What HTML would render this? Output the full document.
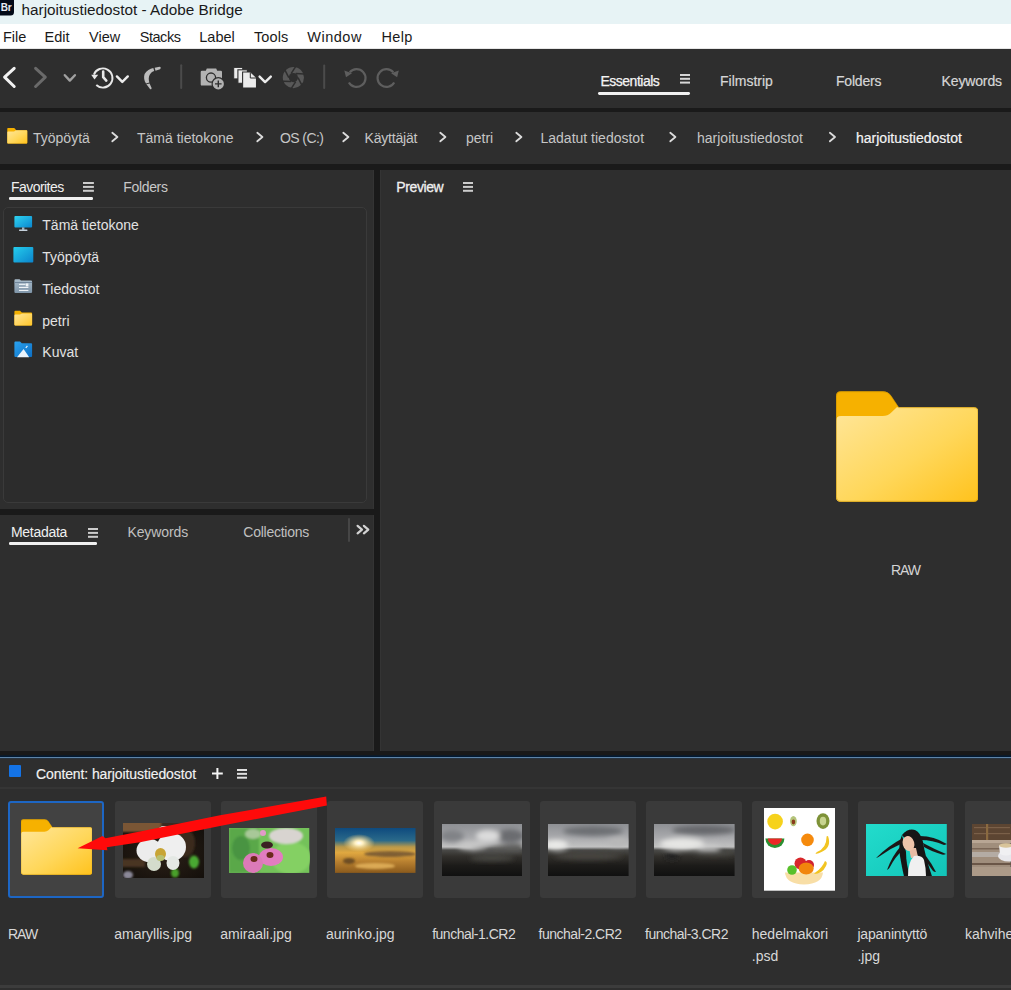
<!DOCTYPE html>
<html><head><meta charset="utf-8"><style>
html,body{margin:0;padding:0;}
body{width:1011px;height:990px;position:relative;overflow:hidden;background:#2e2e2e;font-family:"Liberation Sans",sans-serif;}
.t{position:absolute;line-height:1;white-space:nowrap;}
.r{position:absolute;}
</style></head><body>
<div class="r" style="left:0px;top:0px;width:1011px;height:24px;background:#e7f3f5;"></div>
<svg class="r" style="left:0px;top:0px" width="15" height="16" viewBox="0 0 15 16"><rect x="-4" y="-4" width="18" height="19.5" rx="3.5" fill="#030a18"/><text x="0.8" y="11.2" font-family="Liberation Sans" font-weight="bold" font-size="10" fill="#e8ecf4" letter-spacing="-0.3">Br</text></svg>
<div class="t" style="left:21.6px;top:1.55px;font-size:15.3px;color:#1a1a1a;">harjoitustiedostot - Adobe Bridge</div>
<div class="r" style="left:0px;top:24px;width:1011px;height:25px;background:#ffffff;"></div>
<div class="r" style="left:0px;top:47.5px;width:1011px;height:1.5px;background:#e6e6e6;"></div>
<div class="t" style="left:3px;top:29.53px;font-size:14.5px;color:#1a1a1a;letter-spacing:0px;">File</div>
<div class="t" style="left:44.5px;top:29.53px;font-size:14.5px;color:#1a1a1a;letter-spacing:0px;">Edit</div>
<div class="t" style="left:89px;top:29.53px;font-size:14.5px;color:#1a1a1a;letter-spacing:0px;">View</div>
<div class="t" style="left:139.7px;top:29.53px;font-size:14.5px;color:#1a1a1a;letter-spacing:-0.45px;">Stacks</div>
<div class="t" style="left:199.3px;top:29.53px;font-size:14.5px;color:#1a1a1a;letter-spacing:0px;">Label</div>
<div class="t" style="left:254px;top:29.53px;font-size:14.5px;color:#1a1a1a;letter-spacing:0.1px;">Tools</div>
<div class="t" style="left:307.3px;top:29.53px;font-size:14.5px;color:#1a1a1a;letter-spacing:0.5px;">Window</div>
<div class="t" style="left:381.5px;top:29.53px;font-size:14.5px;color:#1a1a1a;letter-spacing:0.35px;">Help</div>
<div class="r" style="left:0px;top:49px;width:1011px;height:59px;background:#2e2e2e;"></div>
<div class="r" style="left:0px;top:108px;width:1011px;height:4px;background:#1a1a1a;"></div>
<svg class="r" style="left:0px;top:0px" width="1011" height="108" viewBox="0 0 1011 108"><polyline points="14.2,68.3 4.6,77.2 14.2,86.5" fill="none" stroke="#f2f2f2" stroke-width="3" stroke-linecap="round" stroke-linejoin="round"/><polyline points="35.6,68.3 45.3,77.2 35.6,86.5" fill="none" stroke="#6a6a6a" stroke-width="3" stroke-linecap="round" stroke-linejoin="round"/><polyline points="64.8,75.2 69.8,80.6 74.9,75.2" fill="none" stroke="#a0a0a0" stroke-width="2.4" stroke-linecap="round" stroke-linejoin="round"/><path d="M93.9,74.6 A9.6,9.6 0 1 1 96.3,85.0" fill="none" stroke="#e8e8e8" stroke-width="1.9"/><polygon points="91.2,74.8 98.2,74.8 94.5,79.5" fill="#e8e8e8"/><polyline points="103.2,71.6 103.2,77.2 106.3,80.6" fill="none" stroke="#e8e8e8" stroke-width="2.6" stroke-linecap="round" stroke-linejoin="round"/><polyline points="116.9,76.4 122.3,81.9 127.8,76.4" fill="none" stroke="#ececec" stroke-width="2.4" stroke-linecap="round" stroke-linejoin="round"/><path d="M153.3,67.9 C150,68.3 146.5,70.5 144.6,74 C143.6,77 144,80.5 146,83.4 L149.4,82.5 C148.5,80 148.5,77 149.7,74.8 C150.8,72.8 152.5,71.5 154.2,71 Z" fill="#bcbcbc"/><path d="M154.7,67.7 L159.5,66.8 C161,66.8 161,68.3 160,69.2 L155.5,70.8 Z" fill="#bcbcbc"/><path d="M146.4,84.3 L149.6,83.6 L151.6,88 C151.6,89.2 150.6,89.6 150,89 Z" fill="#bcbcbc"/><rect x="180.2" y="64.2" width="2" height="24.7" rx="1" fill="#4b4b4b"/><rect x="323.2" y="64.5" width="2" height="24.5" rx="1" fill="#4b4b4b"/><path d="M200.7,72 Q200.7,70.8 202,70.8 H205.8 L206.8,68.5 H216.2 L217.2,70.8 H220.8 Q222,70.8 222,72 V84.4 Q222,85.6 220.8,85.6 H202 Q200.7,85.6 200.7,84.4 Z" fill="#b2b2b2"/><circle cx="211" cy="77.6" r="4.6" fill="none" stroke="#2e2e2e" stroke-width="1.3"/><circle cx="218.3" cy="83.9" r="6.8" fill="#2e2e2e"/><circle cx="218.3" cy="83.9" r="5.6" fill="#b2b2b2"/><path d="M218.3,80.6 V87.2 M215,83.9 H221.6" stroke="#2e2e2e" stroke-width="1.4"/><rect x="233.7" y="67.4" width="9" height="11.5" fill="#ececec" stroke="#2e2e2e" stroke-width="1"/><rect x="237.9" y="69.8" width="9.5" height="13.5" fill="#ececec" stroke="#2e2e2e" stroke-width="1.1"/><path d="M242.6,72 H250.8 L256.5,77.5 V88 H242.6 Z" fill="#ececec" stroke="#2e2e2e" stroke-width="1.1"/><path d="M250.3,72.5 V78 H256" fill="none" stroke="#2e2e2e" stroke-width="1"/><polyline points="259.6,76.6 265.1,82.1 270.8,76.6" fill="none" stroke="#ececec" stroke-width="2.4" stroke-linecap="round" stroke-linejoin="round"/><circle cx="293.4" cy="77.6" r="10.6" fill="#585858"/><circle cx="293.4" cy="77.6" r="4.6" fill="#2e2e2e"/><line x1="298.00" y1="77.60" x2="301.95" y2="85.30" stroke="#2e2e2e" stroke-width="1.5"/><line x1="295.70" y1="81.58" x2="291.01" y2="88.85" stroke="#2e2e2e" stroke-width="1.5"/><line x1="291.10" y1="81.58" x2="282.46" y2="81.15" stroke="#2e2e2e" stroke-width="1.5"/><line x1="288.80" y1="77.60" x2="284.85" y2="69.90" stroke="#2e2e2e" stroke-width="1.5"/><line x1="291.10" y1="73.62" x2="295.79" y2="66.35" stroke="#2e2e2e" stroke-width="1.5"/><line x1="295.70" y1="73.62" x2="304.34" y2="74.05" stroke="#2e2e2e" stroke-width="1.5"/><path d="M349.8,72.3 A8.9,8.9 0 1 1 348.9,82.45" fill="none" stroke="#5e5e5e" stroke-width="2.2"/><polygon points="344.3,70.6 352,73.2 346,77.3" fill="#5e5e5e"/><path d="M393.3,72.3 A8.9,8.9 0 1 0 394.2,82.45" fill="none" stroke="#5e5e5e" stroke-width="2.2"/><polygon points="398.8,70.6 391.1,73.2 397.1,77.3" fill="#5e5e5e"/></svg>
<div class="t" style="left:600.5px;top:74.25px;font-size:14px;color:#f4f4f4;letter-spacing:-0.5px;-webkit-text-stroke:0.25px #f4f4f4;">Essentials</div>
<div class="r" style="left:598px;top:91.9px;width:92px;height:2.8px;background:#f0f0f0;border-radius:1.4px;"></div>
<svg class="r" style="left:680px;top:73.8px" width="10.3" height="10" viewBox="0 0 10.3 10"><rect x="0" y="0.00" width="10.3" height="2" fill="#d6d6d6"/><rect x="0" y="3.80" width="10.3" height="2" fill="#d6d6d6"/><rect x="0" y="7.60" width="10.3" height="2" fill="#d6d6d6"/></svg>
<div class="t" style="left:720px;top:74.25px;font-size:14px;color:#d6d6d6;-webkit-text-stroke:0.2px #d6d6d6;">Filmstrip</div>
<div class="t" style="left:836px;top:74.25px;font-size:14px;color:#d6d6d6;letter-spacing:-0.2px;-webkit-text-stroke:0.2px #d6d6d6;">Folders</div>
<div class="t" style="left:941.6px;top:74.25px;font-size:14px;color:#d6d6d6;letter-spacing:-0.15px;-webkit-text-stroke:0.2px #d6d6d6;">Keywords</div>
<div class="r" style="left:0px;top:112px;width:1011px;height:52px;background:#2e2e2e;"></div>
<div class="r" style="left:0px;top:164px;width:1011px;height:6px;background:#1a1a1a;"></div>
<svg class="r" style="left:7px;top:128px" width="20.5" height="15.5" viewBox="0 0 143 111"><defs><linearGradient id="fg7_128" x1="0" y1="0" x2="1" y2="1"><stop offset="0" stop-color="#ffe69a"/><stop offset="0.55" stop-color="#ffd75a"/><stop offset="1" stop-color="#ffc21c"/></linearGradient></defs>
<path d="M0,5 Q0,0 5,0 H47 Q52,0 55,4 L63,16 H138 Q143,16 143,21 V106 Q143,111 138,111 H5 Q0,111 0,106 Z" fill="#f6b100"/>
<path d="M0,30 Q0,25 5,25 H47 Q52,25 55,22 L61,16 H138 Q143,16 143,21 V106 Q143,111 138,111 H5 Q0,111 0,106 Z" fill="url(#fg7_128)"/>
<path d="M0.5,5 Q0.5,0.5 5,0.5 H47 Q52,0.5 55,4.5 L63,16.5 H138 Q142.5,16.5 142.5,21 V106 Q142.5,110.5 138,110.5 H5 Q0.5,110.5 0.5,106 Z" fill="none" stroke="#c08a00" stroke-opacity="0.5" stroke-width="1"/></svg>
<div class="t" style="left:33px;top:131.05px;font-size:14px;color:#c6c6c6;">Työpöytä</div>
<div class="t" style="left:137px;top:131.05px;font-size:14px;color:#c6c6c6;">Tämä tietokone</div>
<div class="t" style="left:280px;top:131.05px;font-size:14px;color:#c6c6c6;letter-spacing:-0.6px;">OS (C:)</div>
<div class="t" style="left:364.5px;top:131.05px;font-size:14px;color:#c6c6c6;letter-spacing:-0.2px;">Käyttäjät</div>
<div class="t" style="left:466px;top:131.05px;font-size:14px;color:#c6c6c6;">petri</div>
<div class="t" style="left:540.5px;top:131.05px;font-size:14px;color:#c6c6c6;">Ladatut tiedostot</div>
<div class="t" style="left:697px;top:131.05px;font-size:14px;color:#c6c6c6;">harjoitustiedostot</div>
<div class="t" style="left:856px;top:131.05px;font-size:14px;color:#f4f4f4;-webkit-text-stroke:0.2px #f4f4f4;">harjoitustiedostot</div>
<svg class="r" style="left:0px;top:112px" width="1011" height="52" viewBox="0 112 1011 52"><polyline points="112.3,132.8 117.4,137.05 112.3,141.3" fill="none" stroke="#dcdcdc" stroke-width="1.8" stroke-linecap="round" stroke-linejoin="round"/><polyline points="257.3,132.8 262.4,137.05 257.3,141.3" fill="none" stroke="#dcdcdc" stroke-width="1.8" stroke-linecap="round" stroke-linejoin="round"/><polyline points="343.3,132.8 348.4,137.05 343.3,141.3" fill="none" stroke="#dcdcdc" stroke-width="1.8" stroke-linecap="round" stroke-linejoin="round"/><polyline points="440.3,132.8 445.4,137.05 440.3,141.3" fill="none" stroke="#dcdcdc" stroke-width="1.8" stroke-linecap="round" stroke-linejoin="round"/><polyline points="516.3,132.8 521.4,137.05 516.3,141.3" fill="none" stroke="#dcdcdc" stroke-width="1.8" stroke-linecap="round" stroke-linejoin="round"/><polyline points="670.3,132.8 675.4,137.05 670.3,141.3" fill="none" stroke="#dcdcdc" stroke-width="1.8" stroke-linecap="round" stroke-linejoin="round"/><polyline points="829.9,132.8 835.0,137.05 829.9,141.3" fill="none" stroke="#dcdcdc" stroke-width="1.8" stroke-linecap="round" stroke-linejoin="round"/></svg>
<div class="r" style="left:0px;top:170px;width:374px;height:339px;background:#2e2e2e;"></div>
<div class="r" style="left:374px;top:170px;width:6px;height:581px;background:#1a1a1a;"></div>
<div class="r" style="left:0px;top:509px;width:374px;height:6px;background:#1a1a1a;"></div>
<div class="r" style="left:0px;top:515px;width:374px;height:236px;background:#2e2e2e;"></div>
<div class="t" style="left:11px;top:180.15px;font-size:14px;color:#f0f0f0;letter-spacing:-0.55px;">Favorites</div>
<svg class="r" style="left:83.2px;top:182px" width="10.9" height="10" viewBox="0 0 10.9 10"><rect x="0" y="0.00" width="10.9" height="2" fill="#cccccc"/><rect x="0" y="3.90" width="10.9" height="2" fill="#cccccc"/><rect x="0" y="7.80" width="10.9" height="2" fill="#cccccc"/></svg>
<div class="r" style="left:8.5px;top:197px;width:84px;height:2.6px;background:#f0f0f0;border-radius:1.3px;"></div>
<div class="t" style="left:123.3px;top:180.15px;font-size:14px;color:#c8c8c8;letter-spacing:-0.35px;">Folders</div>
<div class="r" style="left:3px;top:207px;width:364px;height:296px;background:#2c2c2c;box-sizing:border-box;border:1px solid #3a3a3a;border-radius:5px;"></div>
<svg class="r" style="left:0px;top:200px" width="374" height="170" viewBox="0 200 374 170"><defs><linearGradient id="mon" x1="0" y1="0" x2="1" y2="1"><stop offset="0" stop-color="#2fd3f0"/><stop offset="1" stop-color="#0a86cf"/></linearGradient><linearGradient id="desk" x1="0" y1="0" x2="1" y2="1"><stop offset="0" stop-color="#25cdec"/><stop offset="1" stop-color="#0b84cc"/></linearGradient><linearGradient id="doc" x1="0" y1="0" x2="0" y2="1"><stop offset="0" stop-color="#a9bccb"/><stop offset="1" stop-color="#7f95a8"/></linearGradient><linearGradient id="pic" x1="0" y1="0" x2="1" y2="1"><stop offset="0" stop-color="#2aa3f0"/><stop offset="1" stop-color="#0d6fc4"/></linearGradient><linearGradient id="fold" x1="0" y1="0" x2="1" y2="1"><stop offset="0" stop-color="#ffe69a"/><stop offset="1" stop-color="#ffc62a"/></linearGradient></defs><rect x="14.4" y="216" width="17.7" height="11.6" rx="1" fill="url(#mon)"/><rect x="22" y="227.4" width="2.4" height="2.4" fill="#9fb4c4"/><rect x="19" y="229.6" width="8.5" height="1.3" rx="0.6" fill="#c6d2dc"/><rect x="13.4" y="247" width="19.9" height="15.4" rx="1" fill="url(#desk)"/><path d="M14.4,280.5 Q14.4,279.3 15.5,279.3 H19.5 L21,280.6 H31 Q32.1,280.6 32.1,281.7 V292 Q32.1,293 31,293 H15.5 Q14.4,293 14.4,292 Z" fill="url(#doc)"/><rect x="14.4" y="282" width="17.7" height="0.9" fill="#6d8297"/><rect x="19" y="283.8" width="6.5" height="1.1" fill="#eef3f7"/><rect x="25.8" y="283.4" width="2.6" height="3" fill="#eef3f7"/><rect x="19" y="286.9" width="9.4" height="1.1" fill="#eef3f7"/><rect x="19" y="289.9" width="9.4" height="1.1" fill="#eef3f7"/><path d="M14.4,311.8 Q14.4,310.8 15.4,310.8 H20 L21.8,312.6 H31.1 Q32.1,312.6 32.1,313.6 V324.4 Q32.1,325.4 31.1,325.4 H15.4 Q14.4,325.4 14.4,324.4 Z" fill="#f3b000"/><path d="M14.4,315.5 Q14.4,314.6 15.4,314.6 H20 L22,313.4 H31.1 Q32.1,313.4 32.1,314.4 V324.4 Q32.1,325.4 31.1,325.4 H15.4 Q14.4,325.4 14.4,324.4 Z" fill="url(#fold)"/><path d="M14.4,342.5 Q14.4,341.5 15.4,341.5 H20 L21.8,343.2 H31.1 Q32.1,343.2 32.1,344.2 V355.9 Q32.1,356.9 31.1,356.9 H15.4 Q14.4,356.9 14.4,355.9 Z" fill="url(#pic)"/><polygon points="17,357.2 23.6,348.9 29.2,357.2" fill="#eaf4fc"/><line x1="25.8" y1="348" x2="27.4" y2="345.8" stroke="#e6f2fb" stroke-width="1.2"/></svg>
<div class="t" style="left:42.3px;top:218.45px;font-size:14px;color:#e2e2e2;">Tämä tietokone</div>
<div class="t" style="left:42.3px;top:250.15px;font-size:14px;color:#e2e2e2;">Työpöytä</div>
<div class="t" style="left:42.3px;top:281.65px;font-size:14px;color:#e2e2e2;">Tiedostot</div>
<div class="t" style="left:42.3px;top:313.55px;font-size:14px;color:#e2e2e2;">petri</div>
<div class="t" style="left:42.3px;top:345.15px;font-size:14px;color:#e2e2e2;">Kuvat</div>
<div class="r" style="left:380px;top:170px;width:631px;height:581px;background:#2e2e2e;"></div>
<div class="r" style="left:380px;top:170px;width:1.2px;height:581px;background:#343434;"></div>
<div class="r" style="left:372.5px;top:170px;width:1.5px;height:339px;background:#343434;"></div>
<div class="r" style="left:372.5px;top:515px;width:1.5px;height:236px;background:#343434;"></div>
<div class="t" style="left:11px;top:524.75px;font-size:14px;color:#f0f0f0;letter-spacing:-0.3px;">Metadata</div>
<svg class="r" style="left:87.6px;top:527.6px" width="10.5" height="10" viewBox="0 0 10.5 10"><rect x="0" y="0.00" width="10.5" height="2" fill="#cccccc"/><rect x="0" y="3.90" width="10.5" height="2" fill="#cccccc"/><rect x="0" y="7.80" width="10.5" height="2" fill="#cccccc"/></svg>
<div class="r" style="left:8.7px;top:542px;width:88px;height:2.6px;background:#f0f0f0;border-radius:1.3px;"></div>
<div class="t" style="left:127.4px;top:524.75px;font-size:14px;color:#c0c0c0;letter-spacing:-0.1px;">Keywords</div>
<div class="t" style="left:243.3px;top:524.75px;font-size:14px;color:#c0c0c0;letter-spacing:-0.25px;">Collections</div>
<div class="r" style="left:348px;top:518px;width:2px;height:23.6px;background:#464646;border-radius:1px;"></div>
<svg class="r" style="left:354px;top:520px" width="18" height="18" viewBox="0 0 18 18"><polyline points="3.6,5.8 8,9.6 3.6,13.4" fill="none" stroke="#d2d2d2" stroke-width="2.2" stroke-linecap="round" stroke-linejoin="round"/><polyline points="9.9,5.8 14.3,9.6 9.9,13.4" fill="none" stroke="#d2d2d2" stroke-width="2.2" stroke-linecap="round" stroke-linejoin="round"/></svg>
<div class="t" style="left:396.3px;top:180.05px;font-size:14px;color:#f0f0f0;letter-spacing:-0.4px;-webkit-text-stroke:0.3px #f0f0f0;">Preview</div>
<svg class="r" style="left:462.9px;top:182px" width="10.1" height="10" viewBox="0 0 10.1 10"><rect x="0" y="0.00" width="10.1" height="2" fill="#cccccc"/><rect x="0" y="3.90" width="10.1" height="2" fill="#cccccc"/><rect x="0" y="7.80" width="10.1" height="2" fill="#cccccc"/></svg>
<svg class="r" style="left:835.5px;top:391px" width="142.5" height="111" viewBox="0 0 143 111"><defs><linearGradient id="fg835_391" x1="0" y1="0" x2="1" y2="1"><stop offset="0" stop-color="#ffe69a"/><stop offset="0.55" stop-color="#ffd75a"/><stop offset="1" stop-color="#ffc21c"/></linearGradient></defs>
<path d="M0,5 Q0,0 5,0 H47 Q52,0 55,4 L63,16 H138 Q143,16 143,21 V106 Q143,111 138,111 H5 Q0,111 0,106 Z" fill="#f6b100"/>
<path d="M0,30 Q0,25 5,25 H47 Q52,25 55,22 L61,16 H138 Q143,16 143,21 V106 Q143,111 138,111 H5 Q0,111 0,106 Z" fill="url(#fg835_391)"/>
<path d="M0.5,5 Q0.5,0.5 5,0.5 H47 Q52,0.5 55,4.5 L63,16.5 H138 Q142.5,16.5 142.5,21 V106 Q142.5,110.5 138,110.5 H5 Q0.5,110.5 0.5,106 Z" fill="none" stroke="#c08a00" stroke-opacity="0.5" stroke-width="1"/></svg>
<div class="t" style="left:891px;top:563.15px;font-size:14px;color:#d4d4d4;letter-spacing:-1.1px;">RAW</div>
<div class="r" style="left:0px;top:751px;width:1011px;height:6px;background:#191919;"></div>
<div class="r" style="left:0px;top:755px;width:1011px;height:1px;background:#0c1a28;"></div>
<div class="r" style="left:0px;top:756px;width:1011px;height:1px;background:#021a33;"></div>
<div class="r" style="left:0px;top:757px;width:1011px;height:1.2px;background:#5e84a8;"></div>
<div class="r" style="left:0px;top:758px;width:1011px;height:227px;background:#2e2e2e;"></div>
<div class="r" style="left:0px;top:758.2px;width:1011px;height:1px;background:#283440;"></div>
<div class="r" style="left:0px;top:787px;width:1011px;height:2px;background:#353535;"></div>
<div class="r" style="left:0px;top:985px;width:1011px;height:3px;background:#3c3c3c;"></div>
<div class="r" style="left:0px;top:988px;width:1011px;height:2px;background:#2e2e2e;"></div>
<div class="r" style="left:9px;top:764.7px;width:12px;height:12.3px;background:#1473e6;border-radius:1px;"></div>
<div class="t" style="left:36px;top:766.75px;font-size:14px;color:#f2f2f2;letter-spacing:-0.1px;-webkit-text-stroke:0.15px #f2f2f2;">Content: harjoitustiedostot</div>
<svg class="r" style="left:211.8px;top:767.9px" width="11" height="11" viewBox="0 0 11 11"><path d="M5.4,0 V11 M0,5.4 H10.8" stroke="#f4f4f4" stroke-width="2"/></svg>
<svg class="r" style="left:237.1px;top:768.6px" width="10.4" height="10" viewBox="0 0 10.4 10"><rect x="0" y="0.00" width="10.4" height="2" fill="#e0e0e0"/><rect x="0" y="3.85" width="10.4" height="2" fill="#e0e0e0"/><rect x="0" y="7.70" width="10.4" height="2" fill="#e0e0e0"/></svg>
<div class="r" style="left:8.3px;top:801px;width:96.2px;height:96.7px;background:#424242;box-sizing:border-box;border:2.4px solid #1d66c4;border-radius:3px;"></div>
<div class="r" style="left:114.7px;top:801.3px;width:96px;height:96.5px;background:#3a3a3a;border-radius:3px;"></div>
<div class="r" style="left:221px;top:801.3px;width:96px;height:96.5px;background:#3a3a3a;border-radius:3px;"></div>
<div class="r" style="left:327.4px;top:801.3px;width:96px;height:96.5px;background:#3a3a3a;border-radius:3px;"></div>
<div class="r" style="left:433.5px;top:801.3px;width:96px;height:96.5px;background:#3a3a3a;border-radius:3px;"></div>
<div class="r" style="left:539.7px;top:801.3px;width:96px;height:96.5px;background:#3a3a3a;border-radius:3px;"></div>
<div class="r" style="left:646px;top:801.3px;width:96px;height:96.5px;background:#3a3a3a;border-radius:3px;"></div>
<div class="r" style="left:752.2px;top:801.3px;width:96px;height:96.5px;background:#3a3a3a;border-radius:3px;"></div>
<div class="r" style="left:858.3px;top:801.3px;width:96px;height:96.5px;background:#3a3a3a;border-radius:3px;"></div>
<div class="r" style="left:964.5px;top:801.3px;width:96px;height:96.5px;background:#3a3a3a;border-radius:3px;"></div>
<svg class="r" style="left:20.7px;top:819.4px" width="71.3" height="56" viewBox="0 0 143 111"><defs><linearGradient id="fg20_819" x1="0" y1="0" x2="1" y2="1"><stop offset="0" stop-color="#ffe69a"/><stop offset="0.55" stop-color="#ffd75a"/><stop offset="1" stop-color="#ffc21c"/></linearGradient></defs>
<path d="M0,5 Q0,0 5,0 H47 Q52,0 55,4 L63,16 H138 Q143,16 143,21 V106 Q143,111 138,111 H5 Q0,111 0,106 Z" fill="#f6b100"/>
<path d="M0,30 Q0,25 5,25 H47 Q52,25 55,22 L61,16 H138 Q143,16 143,21 V106 Q143,111 138,111 H5 Q0,111 0,106 Z" fill="url(#fg20_819)"/>
<path d="M0.5,5 Q0.5,0.5 5,0.5 H47 Q52,0.5 55,4.5 L63,16.5 H138 Q142.5,16.5 142.5,21 V106 Q142.5,110.5 138,110.5 H5 Q0.5,110.5 0.5,106 Z" fill="none" stroke="#c08a00" stroke-opacity="0.5" stroke-width="1"/></svg>
<svg class="r" style="left:122.7px;top:822.8px" width="81.3" height="55.5" viewBox="0 0 81.3 55.5"><defs><filter id="b1" x="-20%" y="-20%" width="140%" height="140%"><feGaussianBlur stdDeviation="1.2"/></filter><filter id="b3" x="-30%" y="-30%" width="160%" height="160%"><feGaussianBlur stdDeviation="2.4"/></filter><filter id="b2" x="-20%" y="-20%" width="140%" height="140%"><feGaussianBlur stdDeviation="0.6"/></filter></defs><defs><radialGradient id="am" cx="0.5" cy="0.55" r="0.7"><stop offset="0" stop-color="#2c2118"/><stop offset="1" stop-color="#120e0a"/></radialGradient></defs>
<rect width="81.3" height="55.5" fill="url(#am)"/>
<g filter="url(#b1)">
<rect x="-3" y="-3" width="45" height="12" fill="#7a5634"/>
<rect x="38" y="-3" width="46" height="9" fill="#3a2c20"/>
<ellipse cx="62" cy="20" rx="10" ry="14" fill="#3a2a1e"/>
<rect x="-3" y="36" width="25" height="8" fill="#4a3422"/>
<ellipse cx="71" cy="39" rx="5" ry="6.5" fill="#4aa830"/>
<ellipse cx="52" cy="50" rx="4" ry="4.5" fill="#4aa02a"/>
<ellipse cx="5" cy="52" rx="5" ry="4" fill="#8a8898"/>
</g>
<g filter="url(#b2)">
<ellipse cx="41" cy="8" rx="6" ry="5" fill="#e8e8e8"/>
<ellipse cx="26.5" cy="27.5" rx="13" ry="11.5" fill="#ececec"/>
<ellipse cx="48.5" cy="24" rx="14.5" ry="14" fill="#efefef"/>
<ellipse cx="31" cy="41" rx="7" ry="7" fill="#d4dccc"/>
<ellipse cx="50" cy="40" rx="6.5" ry="7" fill="#e4e8e4"/>
<ellipse cx="37.5" cy="31" rx="5.5" ry="6" fill="#c8a434"/>
<ellipse cx="37.5" cy="35" rx="4" ry="3" fill="#b8c070"/>
</g></svg>
<svg class="r" style="left:229.4px;top:827.8px" width="80.3" height="44.9" viewBox="0 0 80.3 44.9"><defs><filter id="b1" x="-20%" y="-20%" width="140%" height="140%"><feGaussianBlur stdDeviation="1.2"/></filter><filter id="b3" x="-30%" y="-30%" width="160%" height="160%"><feGaussianBlur stdDeviation="2.4"/></filter><filter id="b2" x="-20%" y="-20%" width="140%" height="140%"><feGaussianBlur stdDeviation="0.6"/></filter></defs><rect width="80.3" height="44.9" fill="#74c25a"/>
<g filter="url(#b1)">
<rect x="0" y="0" width="30" height="44.9" fill="#5aa84a"/>
<ellipse cx="62" cy="30" rx="20" ry="16" fill="#84d064"/>
<ellipse cx="57" cy="8" rx="17" ry="8" fill="#d8d4d0"/>
<ellipse cx="12" cy="20" rx="9" ry="12" fill="#4a9442"/>
<ellipse cx="24" cy="6" rx="8" ry="5" fill="#a8c898"/>
</g>
<g filter="url(#b2)">
<ellipse cx="42" cy="29" rx="12" ry="9" fill="#e27cc0"/>
<ellipse cx="24" cy="35" rx="10" ry="10" fill="#dc7ab8"/>
<ellipse cx="41" cy="27" rx="3.5" ry="3" fill="#6a2a1a"/>
<ellipse cx="25" cy="31" rx="3.5" ry="3" fill="#6a2a1a"/>
<ellipse cx="38" cy="17" rx="6" ry="3.5" fill="#3a2424"/>
<ellipse cx="34" cy="5" rx="3" ry="3" fill="#e29ac8"/>
</g></svg>
<svg class="r" style="left:335.4px;top:827.8px" width="80.5" height="44.9" viewBox="0 0 80.5 44.9"><defs><filter id="b1" x="-20%" y="-20%" width="140%" height="140%"><feGaussianBlur stdDeviation="1.2"/></filter><filter id="b3" x="-30%" y="-30%" width="160%" height="160%"><feGaussianBlur stdDeviation="2.4"/></filter><filter id="b2" x="-20%" y="-20%" width="140%" height="140%"><feGaussianBlur stdDeviation="0.6"/></filter></defs><defs><linearGradient id="au" x1="0" y1="0" x2="0" y2="1"><stop offset="0" stop-color="#0e4a7e"/><stop offset="0.28" stop-color="#2a6a8a"/><stop offset="0.42" stop-color="#b8984a"/><stop offset="0.55" stop-color="#e0a840"/><stop offset="0.75" stop-color="#b88030"/><stop offset="1" stop-color="#8a5a1c"/></linearGradient>
<radialGradient id="sun" cx="0.5" cy="0.5" r="0.5"><stop offset="0" stop-color="#ffffff"/><stop offset="0.25" stop-color="#fff0c0"/><stop offset="1" stop-color="#ffd070" stop-opacity="0"/></radialGradient></defs>
<rect width="80.5" height="44.9" fill="url(#au)"/>
<ellipse cx="24" cy="15" rx="16" ry="9" fill="url(#sun)"/>
<g filter="url(#b1)" opacity="0.8">
<ellipse cx="55" cy="26" rx="26" ry="3" fill="#6a5030"/>
<ellipse cx="14" cy="33" rx="6" ry="3" fill="#5a4020"/>
<ellipse cx="40" cy="38" rx="20" ry="3" fill="#e8b860"/>
</g></svg>
<svg class="r" style="left:441.6px;top:823.9px" width="80.6" height="52" viewBox="0 0 80.6 52"><defs><filter id="b1" x="-20%" y="-20%" width="140%" height="140%"><feGaussianBlur stdDeviation="1.2"/></filter><filter id="b3" x="-30%" y="-30%" width="160%" height="160%"><feGaussianBlur stdDeviation="2.4"/></filter><filter id="b2" x="-20%" y="-20%" width="140%" height="140%"><feGaussianBlur stdDeviation="0.6"/></filter></defs><defs><linearGradient id="fc0" x1="0" y1="0" x2="0" y2="1"><stop offset="0" stop-color="#8e9094"/><stop offset="0.25" stop-color="#a8a9ac"/><stop offset="0.44" stop-color="#c2c2c2"/><stop offset="0.5" stop-color="#4a4a48"/><stop offset="0.62" stop-color="#32302c"/><stop offset="0.8" stop-color="#1c1b19"/><stop offset="1" stop-color="#101010"/></linearGradient></defs>
<rect width="80.6" height="52" fill="url(#fc0)"/>
<g filter="url(#b3)">
<ellipse cx="68" cy="12" rx="14" ry="7" fill="#6a6c70"/><ellipse cx="10" cy="12" rx="12" ry="6" fill="#808286"/><ellipse cx="46" cy="12" rx="12" ry="6" fill="#dcdcdc"/><ellipse cx="30" cy="22" rx="14" ry="4" fill="#c8c8c8"/><path d="M30,26 Q55,20 80.6,20 V28 H30 Z" fill="#585856"/><ellipse cx="50" cy="34" rx="22" ry="3" fill="#4a4844"/></g></svg>
<svg class="r" style="left:548px;top:823.9px" width="80.6" height="52" viewBox="0 0 80.6 52"><defs><filter id="b1" x="-20%" y="-20%" width="140%" height="140%"><feGaussianBlur stdDeviation="1.2"/></filter><filter id="b3" x="-30%" y="-30%" width="160%" height="160%"><feGaussianBlur stdDeviation="2.4"/></filter><filter id="b2" x="-20%" y="-20%" width="140%" height="140%"><feGaussianBlur stdDeviation="0.6"/></filter></defs><defs><linearGradient id="fc1" x1="0" y1="0" x2="0" y2="1"><stop offset="0" stop-color="#8e9094"/><stop offset="0.25" stop-color="#a8a9ac"/><stop offset="0.44" stop-color="#c2c2c2"/><stop offset="0.5" stop-color="#4a4a48"/><stop offset="0.62" stop-color="#32302c"/><stop offset="0.8" stop-color="#1c1b19"/><stop offset="1" stop-color="#101010"/></linearGradient></defs>
<rect width="80.6" height="52" fill="url(#fc1)"/>
<g filter="url(#b3)">
<ellipse cx="45" cy="7" rx="30" ry="5" fill="#6c6e72"/><ellipse cx="8" cy="21" rx="12" ry="5" fill="#eaeae8"/><ellipse cx="70" cy="18" rx="10" ry="4" fill="#b8b8b8"/><ellipse cx="40" cy="32" rx="34" ry="3.5" fill="#484642"/></g></svg>
<svg class="r" style="left:654.2px;top:823.9px" width="80.6" height="52" viewBox="0 0 80.6 52"><defs><filter id="b1" x="-20%" y="-20%" width="140%" height="140%"><feGaussianBlur stdDeviation="1.2"/></filter><filter id="b3" x="-30%" y="-30%" width="160%" height="160%"><feGaussianBlur stdDeviation="2.4"/></filter><filter id="b2" x="-20%" y="-20%" width="140%" height="140%"><feGaussianBlur stdDeviation="0.6"/></filter></defs><defs><linearGradient id="fc2" x1="0" y1="0" x2="0" y2="1"><stop offset="0" stop-color="#8e9094"/><stop offset="0.25" stop-color="#a8a9ac"/><stop offset="0.44" stop-color="#c2c2c2"/><stop offset="0.5" stop-color="#4a4a48"/><stop offset="0.62" stop-color="#32302c"/><stop offset="0.8" stop-color="#1c1b19"/><stop offset="1" stop-color="#101010"/></linearGradient></defs>
<rect width="80.6" height="52" fill="url(#fc2)"/>
<g filter="url(#b3)">
<ellipse cx="50" cy="6" rx="32" ry="5" fill="#66686c"/><ellipse cx="28" cy="20" rx="22" ry="6" fill="#e6e6e4"/><ellipse cx="54" cy="24" rx="12" ry="2.5" fill="#d0d0d0"/><ellipse cx="18" cy="32" rx="7" ry="4" fill="#242422"/><ellipse cx="60" cy="29" rx="20" ry="3" fill="#4a4844"/></g></svg>
<svg class="r" style="left:763.8px;top:808.2px" width="71.3" height="82.7" viewBox="0 0 71.3 82.7"><defs><filter id="b1" x="-20%" y="-20%" width="140%" height="140%"><feGaussianBlur stdDeviation="1.2"/></filter><filter id="b3" x="-30%" y="-30%" width="160%" height="160%"><feGaussianBlur stdDeviation="2.4"/></filter><filter id="b2" x="-20%" y="-20%" width="140%" height="140%"><feGaussianBlur stdDeviation="0.6"/></filter></defs><rect width="71.3" height="82.7" fill="#ffffff"/>
<g filter="url(#b2)">
<circle cx="11.1" cy="13.6" r="7.8" fill="#f6d21e"/>
<ellipse cx="29.4" cy="13.1" rx="3.4" ry="5.2" fill="#b4c47a"/>
<ellipse cx="29.4" cy="14" rx="1.8" ry="2.4" fill="#8a3a1a"/>
<ellipse cx="59" cy="13.1" rx="6.5" ry="7.8" fill="#7e9238"/><ellipse cx="59" cy="13.1" rx="3.2" ry="4.4" fill="#c8d490"/>
<path d="M1.4,30.5 A9.5,9.5 0 0 0 20.4,30.5 Z" fill="#2a9030"/><path d="M3.8,30.5 A7.1,6.5 0 0 0 18,30.5 Z" fill="#ec2828"/>
<circle cx="43.5" cy="31.9" r="6.3" fill="#f58a10"/>
<path d="M64,28 Q69,42 51.5,46 Q52,44.5 53,44 Q63,40 62.5,28.5 Z" fill="#f2c420"/>
<path d="M21,64.5 H59 Q58,76 40,76.5 Q22,76 21,64.5 Z" fill="#f8dea6"/>
<circle cx="36.5" cy="55.5" r="6" fill="#d8282a"/><circle cx="45" cy="57" r="5" fill="#d02030"/>
<circle cx="28" cy="62" r="4.8" fill="#58c02a"/><ellipse cx="42.2" cy="60.6" rx="7.5" ry="6" fill="#f2860c"/>
<path d="M52,64 Q58,60 61,53 Q64,54 62,58 Q58,66 50,66 Z" fill="#f2c420"/>
</g></svg>
<svg class="r" style="left:866.1px;top:823.9px" width="80.8" height="52.2" viewBox="0 0 80.8 52.2"><defs><filter id="b1" x="-20%" y="-20%" width="140%" height="140%"><feGaussianBlur stdDeviation="1.2"/></filter><filter id="b3" x="-30%" y="-30%" width="160%" height="160%"><feGaussianBlur stdDeviation="2.4"/></filter><filter id="b2" x="-20%" y="-20%" width="140%" height="140%"><feGaussianBlur stdDeviation="0.6"/></filter></defs><defs><linearGradient id="jt" x1="0" y1="0" x2="1" y2="1"><stop offset="0" stop-color="#22dccc"/><stop offset="1" stop-color="#12c4b8"/></linearGradient></defs>
<rect width="80.8" height="52.2" fill="url(#jt)"/>
<g filter="url(#b2)">
<path d="M36,11 Q42,4 49,6 Q55,9 57,18 Q59,32 66,52.2 H58 Q54,36 50,28 Z" fill="#181414"/>
<path d="M36,11 Q32,20 34,32 Q36,44 38,52.2 H44 Q40,40 40,28 Z" fill="#181414"/>
<path d="M37,14 Q22,22 10,34 Q12,33.5 14,32 Q25,24 37,19 Z" fill="#1c1818"/>
<path d="M35,22 Q26,32 21,46 Q23,45 24,43 Q29,33 36,27 Z" fill="#1c1818"/>
<path d="M54,12 Q68,12 80.8,20 Q79,21 78,21 Q66,16 55,16 Z" fill="#1c1818"/>
<path d="M57,19 Q68,25 80,30 Q78,31 76,30.5 Q65,27 58,23 Z" fill="#1c1818"/>
<path d="M60,32 Q66,40 70,48 Q68,48 67,47 Q62,40 59,36 Z" fill="#1c1818"/>
<path d="M43,24 L50,24 L52,33 L45,34 Z" fill="#e8bca4"/><ellipse cx="42.5" cy="19.5" rx="5.8" ry="7.6" fill="#efc4aa" transform="rotate(-15 42.5 19.5)"/>
<path d="M42,52.2 Q42,38 48,32 Q56,31 58,36 Q60,44 60,52.2 Z" fill="#f0f0f0"/>
</g></svg>
<svg class="r" style="left:972.4px;top:824.1px" width="38.6" height="52" viewBox="0 0 38.6 52"><defs><filter id="b1" x="-20%" y="-20%" width="140%" height="140%"><feGaussianBlur stdDeviation="1.2"/></filter><filter id="b3" x="-30%" y="-30%" width="160%" height="160%"><feGaussianBlur stdDeviation="2.4"/></filter><filter id="b2" x="-20%" y="-20%" width="140%" height="140%"><feGaussianBlur stdDeviation="0.6"/></filter></defs><rect width="38.6" height="52" fill="#a08e7c"/>
<g filter="url(#b2)">
<rect x="-2" y="-2" width="42" height="18" fill="#5c4432"/>
<rect x="2" y="3" width="36" height="1.2" fill="#7a6048"/><rect x="2" y="9" width="36" height="1.2" fill="#7a6048"/>
<rect x="14" y="0" width="2.2" height="16" fill="#8a6a40"/>
<rect x="-2" y="16" width="42" height="3" fill="#b8a694"/>
<rect x="-2" y="24" width="42" height="1.5" fill="#7a6656"/>
<rect x="-2" y="28" width="30" height="5" fill="#b4aca4"/>
<rect x="-2" y="39" width="42" height="2" fill="#6a5646"/>
<rect x="-2" y="43" width="42" height="9" fill="#ac9a88"/>
<ellipse cx="37" cy="32" rx="11" ry="5.5" fill="#e8e8ec"/>
<path d="M27,21 H40 V30 Q34,33 28,30 Z" fill="#f0f0f2"/>
<ellipse cx="34" cy="21.5" rx="7" ry="2.2" fill="#d8c49a"/>
</g></svg>
<div class="t" style="left:8px;top:926.85px;font-size:14px;color:#d8d8d8;letter-spacing:-1px;">RAW</div>
<div class="t" style="left:114.2px;top:926.85px;font-size:14px;color:#d8d8d8;">amaryllis.jpg</div>
<div class="t" style="left:220.2px;top:926.85px;font-size:14px;color:#d8d8d8;">amiraali.jpg</div>
<div class="t" style="left:326px;top:926.85px;font-size:14px;color:#d8d8d8;">aurinko.jpg</div>
<div class="t" style="left:432.2px;top:926.85px;font-size:14px;color:#d8d8d8;letter-spacing:-0.5px;">funchal-1.CR2</div>
<div class="t" style="left:538.6px;top:926.85px;font-size:14px;color:#d8d8d8;letter-spacing:-0.5px;">funchal-2.CR2</div>
<div class="t" style="left:645px;top:926.85px;font-size:14px;color:#d8d8d8;letter-spacing:-0.5px;">funchal-3.CR2</div>
<div class="t" style="left:751.8px;top:926.85px;font-size:14px;color:#d8d8d8;">hedelmakori</div>
<div class="t" style="left:857.4px;top:926.85px;font-size:14px;color:#d8d8d8;letter-spacing:-0.15px;">japanintyttö</div>
<div class="t" style="left:965px;top:926.85px;font-size:14px;color:#d8d8d8;">kahvihe</div>
<div class="t" style="left:751.8px;top:949.15px;font-size:14px;color:#d8d8d8;">.psd</div>
<div class="t" style="left:857.4px;top:949.15px;font-size:14px;color:#d8d8d8;">.jpg</div>
<svg class="r" style="left:0px;top:780px" width="1011" height="90" viewBox="0 780 1011 90"><polygon points="77.6,848.2 102.5,836 105.5,838.3 140,831.4 220,815.3 326.2,796.5 326.9,805.4 220,826 140,842.2 106.8,847.3 107.4,850.2" fill="#ff0a0a"/></svg>
</body></html>
